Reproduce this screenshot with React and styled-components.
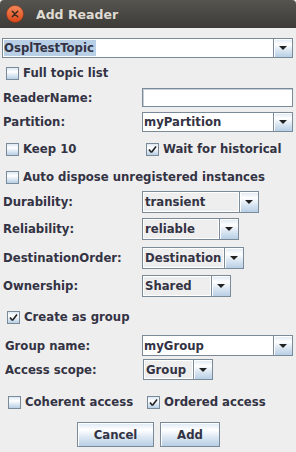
import styled, { createGlobalStyle } from "styled-components";

const GlobalStyle = createGlobalStyle`
  html, body { margin: 0; padding: 0; background: #eeeeee; }
  body { font-family: "DejaVu Sans", Verdana, sans-serif; }
  * { box-sizing: border-box; }
`;

const Window = styled.div`
  width: 296px;
  height: 452px;
  background: #eeeeee;
  display: flex;
  flex-direction: column;
  overflow: hidden;
`;

const TitleBar = styled.div`
  height: 28px;
  flex: none;
  display: flex;
  align-items: center;
  padding-left: 6px;
  gap: 12px;
  background: linear-gradient(#55544f, #3c3b37);
  border-radius: 4px 4px 0 0;
`;

const Title = styled.span`
  font-family: "DejaVu Sans", sans-serif;
  font-weight: bold;
  font-size: 12.5px;
  color: #dfdbd2;
  margin-top: 1px;
`;

const Body = styled.div`
  display: flex;
  flex-direction: column;
  padding: 0 3px 0 3px;
  font-size: 11.7px;
  font-weight: bold;
  color: #333344;
`;

const Row = styled.div`
  display: flex;
  align-items: center;
  margin-top: ${(p) => p.$mt}px;
  height: ${(p) => p.$h || 20}px;
  padding-left: ${(p) => p.$pl || 0}px;
`;

const Label = styled.span`
  width: 139px;
  flex: none;
  padding-left: ${(p) => p.$indent || 0}px;
  white-space: nowrap;
`;

const Combo = styled.div`
  display: flex;
  height: ${(p) => p.$h || 20}px;
  width: ${(p) => p.$w}px;
  margin-left: ${(p) => p.$ml || 0}px;
  border: 1px solid #7a8a99;
  background: ${(p) => (p.$editable ? "#ffffff" : "#eeeeee")};
`;

const ComboText = styled.div`
  flex: 1;
  display: flex;
  align-items: center;
  padding-left: 1px;
  white-space: nowrap;
  overflow: hidden;
  ${(p) =>
    !p.$editable &&
    `box-shadow: inset 0 0 0 1px #ffffff; padding-left: 2px;`}
`;

const Selected = styled.span`
  background: #b8cfe5;
  padding-right: 2px;
  line-height: 16px;
`;

const ArrowButton = styled.div`
  width: 19px;
  flex: none;
  display: flex;
  align-items: center;
  justify-content: center;
  border-left: 1px solid #7a8a99;
  background: linear-gradient(#dde8f3 0%, #ffffff 30%, #dde8f3 60%, #b8cfe5 100%);
  box-shadow: inset 1px 1px 0 #ffffff;
`;

const TextField = styled.div`
  width: 152px;
  height: 19px;
  border: 1px solid #7a8a99;
  background: #ffffff;
  box-shadow: inset 1px 1px 0 #c6ced6;
`;

const Check = styled.label`
  display: flex;
  align-items: center;
  gap: 4px;
  width: ${(p) => (p.$w ? `${p.$w}px` : "auto")};
  white-space: nowrap;
`;

const Box = styled.span`
  width: 13px;
  height: 13px;
  flex: none;
  border: 1px solid #7a8a99;
  background: linear-gradient(#dde8f3 0%, #ffffff 35%, #dde8f3 65%, #b8cfe5 100%);
  display: flex;
  align-items: center;
  justify-content: center;
`;

const ButtonBar = styled.div`
  display: flex;
  justify-content: center;
  gap: 6px;
  margin-top: 10px;
  padding-left: 1px;
`;

const Button = styled.button`
  height: 25px;
  width: ${(p) => p.$w}px;
  border: 1px solid #7a8a99;
  font-family: "DejaVu Sans", sans-serif;
  font-size: 11.7px;
  font-weight: bold;
  color: #333344;
  background: linear-gradient(#dde8f3 0%, #ffffff 30%, #dde8f3 60%, #b8cfe5 100%);
  box-shadow: inset 1px 1px 0 #ffffff;
  padding: 0;
`;

function CloseIcon() {
  return (
    <svg width="18" height="18" viewBox="0 0 18 18">
      <defs>
        <linearGradient id="cl" x1="0" y1="0" x2="0" y2="1">
          <stop offset="0" stopColor="#f58a5c" />
          <stop offset="1" stopColor="#dc4617" />
        </linearGradient>
      </defs>
      <circle cx="9" cy="9" r="8.5" fill="url(#cl)" stroke="#8a3418" strokeWidth="0.6" />
      <path d="M6.3 6.3 L11.7 11.7 M11.7 6.3 L6.3 11.7" stroke="#3a2a22" strokeWidth="1.5" strokeLinecap="round" />
    </svg>
  );
}

function Arrow() {
  return (
    <svg width="8" height="4" viewBox="0 0 8 4">
      <path d="M0 0 H8 L4 4 Z" fill="#222222" />
    </svg>
  );
}

function Tick() {
  return (
    <svg width="9" height="9" viewBox="0 0 9 9">
      <path d="M1 4.5 L3 7 L3.8 7 L8 1.5" stroke="#222222" strokeWidth="1.6" fill="none" />
    </svg>
  );
}

function CheckBox({ checked, label, w }) {
  return (
    <Check $w={w}>
      <Box>{checked && <Tick />}</Box>
      <span>{label}</span>
    </Check>
  );
}

function ComboBox({ value, w, h, editable, selected, ml }) {
  return (
    <Combo $w={w} $h={h} $editable={editable} $ml={ml}>
      <ComboText $editable={editable}>
        {selected ? <Selected>{value}</Selected> : value}
      </ComboText>
      <ArrowButton>
        <Arrow />
      </ArrowButton>
    </Combo>
  );
}

export default function App() {
  return (
    <>
      <GlobalStyle />
      <Window>
        <TitleBar>
          <CloseIcon />
          <Title>Add Reader</Title>
        </TitleBar>
        <Body>
          <Row $mt={10}>
            <ComboBox value="OsplTestTopic" w={292} editable selected ml={-1} />
          </Row>
          <Row $mt={5} $pl={3}>
            <CheckBox label="Full topic list" />
          </Row>
          <Row $mt={5} $h={19}>
            <Label>ReaderName:</Label>
            <TextField />
          </Row>
          <Row $mt={5}>
            <Label>Partition:</Label>
            <ComboBox value="myPartition" w={152} editable />
          </Row>
          <Row $mt={7} $pl={3}>
            <CheckBox label="Keep 10" w={140} />
            <CheckBox label="Wait for historical" checked />
          </Row>
          <Row $mt={8} $pl={3}>
            <CheckBox label="Auto dispose unregistered instances" />
          </Row>
          <Row $mt={4} $h={22}>
            <Label>Durability:</Label>
            <ComboBox value="transient" w={117} h={22} />
          </Row>
          <Row $mt={5} $h={22}>
            <Label>Reliability:</Label>
            <ComboBox value="reliable" w={97} h={22} />
          </Row>
          <Row $mt={7} $h={22}>
            <Label>DestinationOrder:</Label>
            <ComboBox value="Destination" w={102} h={22} />
          </Row>
          <Row $mt={6} $h={22}>
            <Label>Ownership:</Label>
            <ComboBox value="Shared" w={89} h={22} />
          </Row>
          <Row $mt={10} $pl={4}>
            <CheckBox label="Create as group" checked />
          </Row>
          <Row $mt={8} $h={21}>
            <Label $indent={2}>Group name:</Label>
            <ComboBox value="myGroup" w={152} h={21} editable />
          </Row>
          <Row $mt={3} $h={21}>
            <Label $indent={2}>Access scope:</Label>
            <ComboBox value="Group" w={70} h={21} ml={1} />
          </Row>
          <Row $mt={12} $pl={5}>
            <CheckBox label="Coherent access" w={139} />
            <CheckBox label="Ordered access" checked />
          </Row>
          <ButtonBar>
            <Button $w={77}>Cancel</Button>
            <Button $w={60}>Add</Button>
          </ButtonBar>
        </Body>
      </Window>
    </>
  );
}
